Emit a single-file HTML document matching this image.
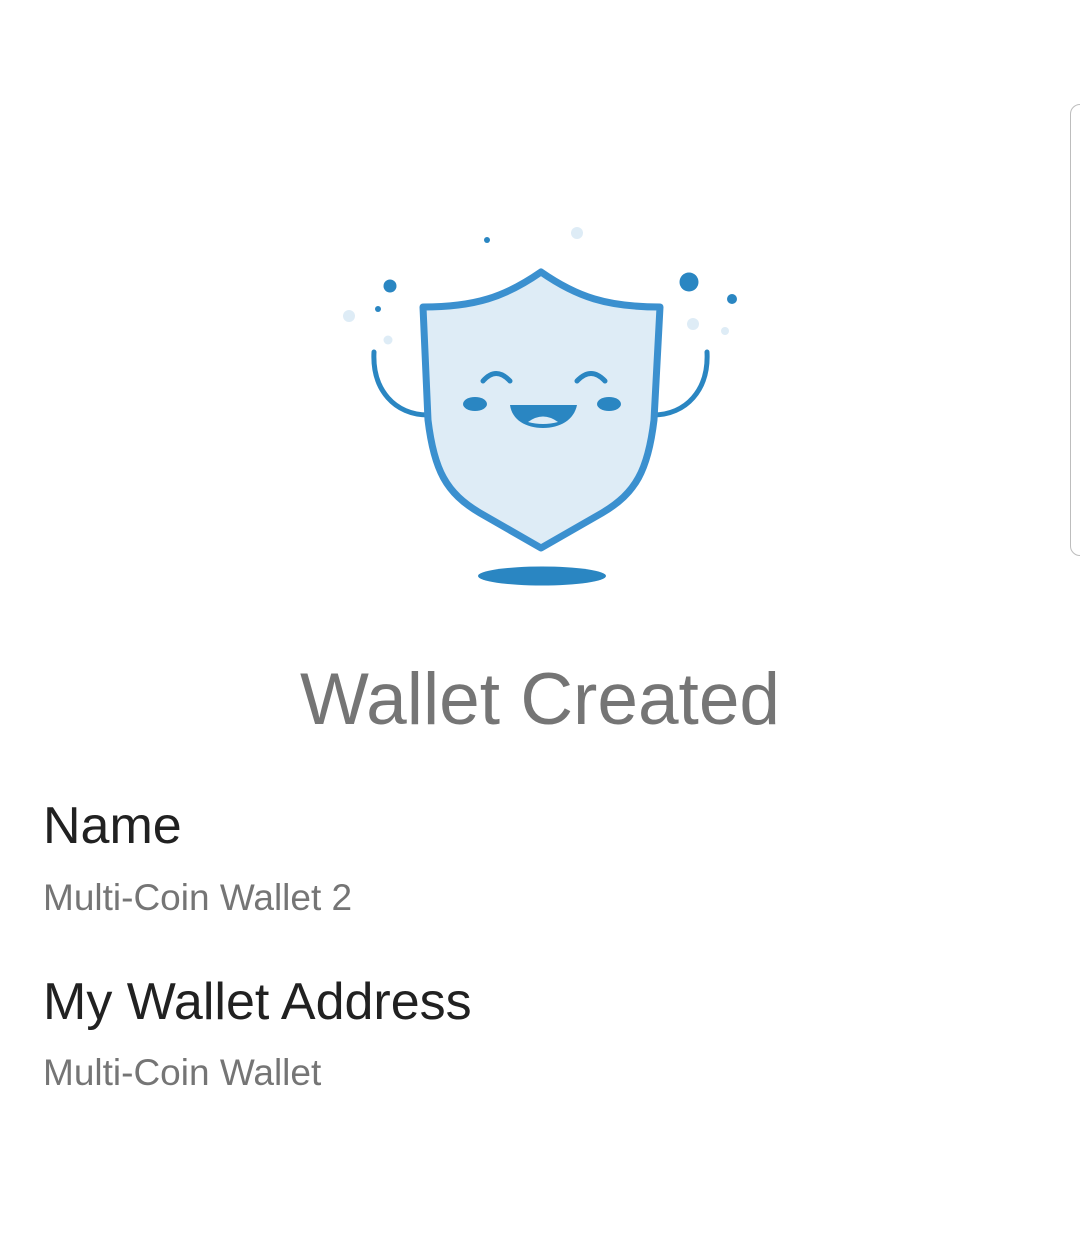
<!DOCTYPE html>
<html><head><style>
body{margin:0;width:1080px;height:1244px;background:#fff;position:relative;overflow:hidden;font-family:"Liberation Sans",sans-serif}
.t{position:absolute;line-height:1;white-space:nowrap}
</style></head><body>
<div style="position:absolute;left:1070px;top:104px;width:20px;height:452px;border:1.5px solid #bdbdbd;border-radius:10px;box-sizing:border-box"></div>
<svg style="position:absolute;left:0;top:0" width="1080" height="620">
<g fill="#2a86c2"><circle cx="487" cy="240" r="3"/><circle cx="390" cy="286" r="6.5"/><circle cx="378" cy="309" r="3"/><circle cx="689" cy="282" r="9.5"/><circle cx="732" cy="299" r="5"/></g>
<g fill="#deecf6"><circle cx="577" cy="233" r="6"/><circle cx="349" cy="316" r="6"/><circle cx="388" cy="340" r="4.5"/><circle cx="693" cy="324" r="6"/><circle cx="725" cy="331" r="4"/></g>
<g fill="none" stroke="#2a86c2" stroke-width="5" stroke-linecap="round">
<path d="M374 352 C372 390 395 415 428 415"/><path d="M707 352 C709 390 686 415 653 415"/>
</g>
<path d="M541 272 C505 297 475 307 423 307 L428 420 C434 470 446 493 480 513 L541 548 L602 513 C636 493 648 470 654 420 L660 307 C607 307 577 297 541 272 Z" fill="#deecf6" stroke="#3b90cf" stroke-width="7" stroke-linejoin="round"/>
<g fill="none" stroke="#2a86c2" stroke-width="5" stroke-linecap="round"><path d="M483 381 Q496 366 510 381"/><path d="M577 381 Q591 366 605 381"/></g>
<g fill="#2a86c2"><ellipse cx="475" cy="404" rx="12" ry="7"/><ellipse cx="609" cy="404" rx="12" ry="7"/>
<path d="M510 405 L577 405 C574 420 560 428 543 428 C526 428 512 420 510 405Z"/>
<ellipse cx="542" cy="576" rx="64" ry="9.5"/></g>
<path d="M528 422 Q543 411 558 422 Q543 426 528 422Z" fill="#deecf6"/>
</svg>
<div class="t" style="left:0;width:1080px;text-align:center;top:663px;font-size:73px;color:#757575">Wallet Created</div>
<div class="t" style="left:43px;top:800px;font-size:52px;color:#212121">Name</div>
<div class="t" style="left:43px;top:879px;font-size:37px;color:#757575">Multi-Coin Wallet 2</div>
<div class="t" style="left:43px;top:976px;font-size:52px;color:#212121">My Wallet Address</div>
<div class="t" style="left:43px;top:1054px;font-size:37px;color:#757575">Multi-Coin Wallet</div>
</body></html>
